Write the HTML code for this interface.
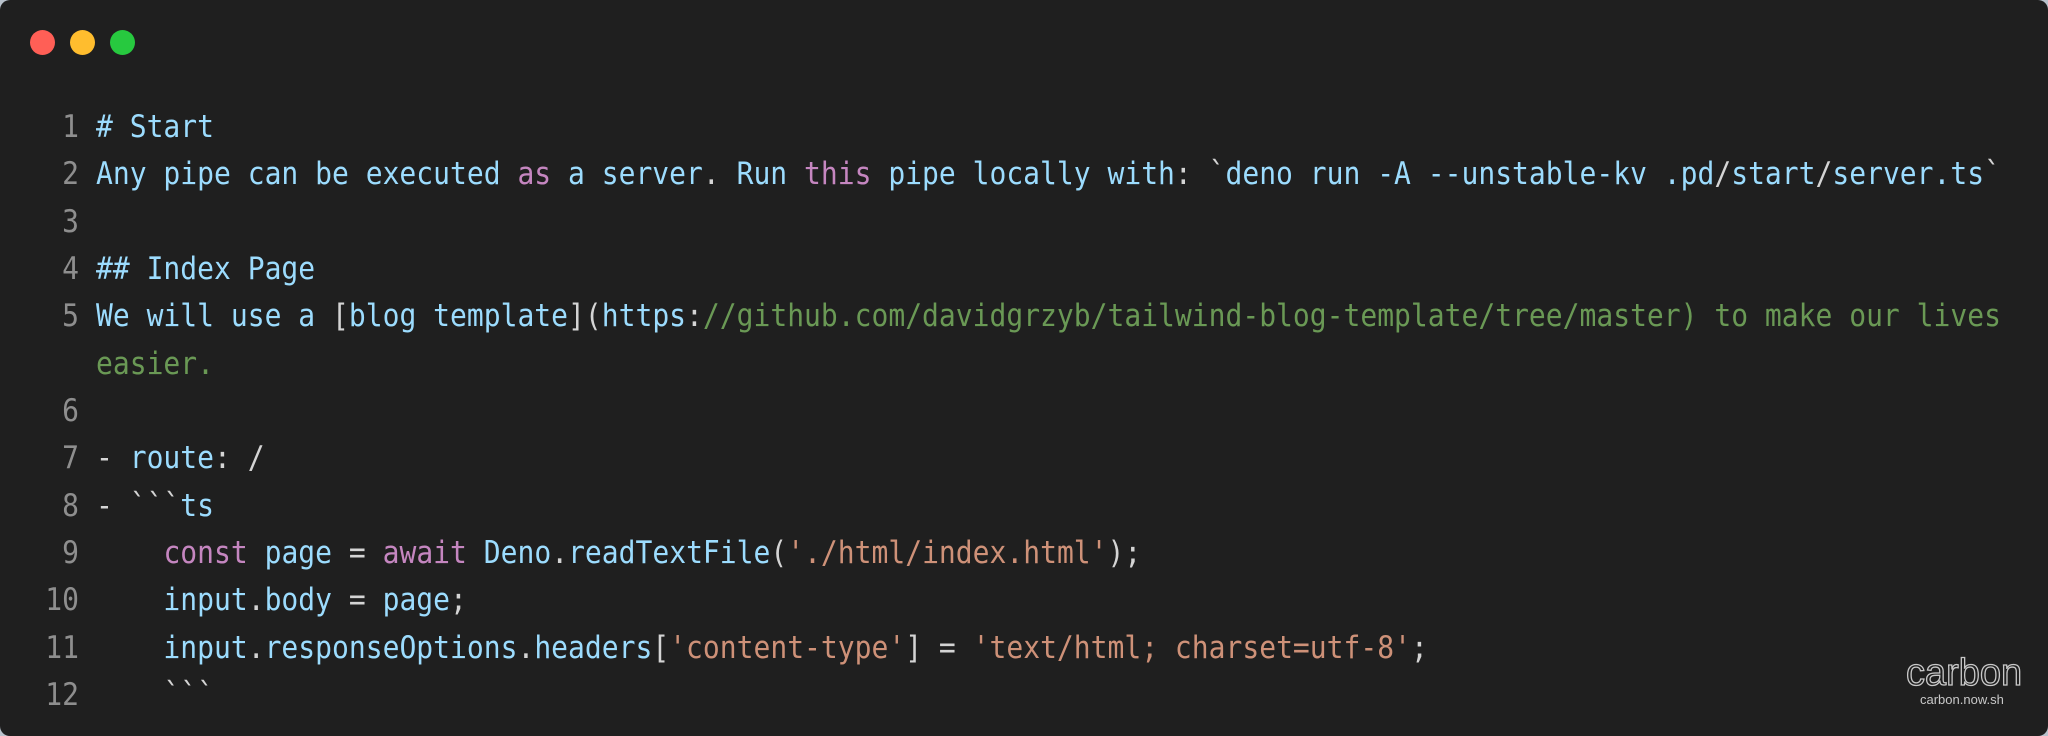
<!DOCTYPE html>
<html><head><meta charset="utf-8"><style>
html,body{margin:0;padding:0;width:2048px;height:736px;overflow:hidden;background:#b9c2cc;}
.card{position:absolute;left:0;top:0;width:2048px;height:736px;background:#1f1f1f;border-radius:10px;overflow:hidden;}
.dot{position:absolute;top:29.5px;width:25px;height:25px;border-radius:50%;}
.code{position:absolute;left:0;top:103px;font-family:"DejaVu Sans Mono","Liberation Mono",monospace;font-size:28px;}
.row{height:47.33px;line-height:47.33px;position:relative;}
.n{position:absolute;left:0;top:0;width:79px;text-align:right;color:#8e8e8e;white-space:pre;transform:scaleY(1.12);}
.t{position:absolute;left:96px;top:0;color:#9cdcfe;white-space:pre;transform:scaleY(1.12);}
.w{color:#d4d4d4}.p{color:#c586c0}.g{color:#6a9955}.o{color:#ce9178}.b{color:#9cdcfe}
.logo{position:absolute;left:1906px;top:652px;font-family:"Liberation Sans",sans-serif;font-size:38px;color:transparent;-webkit-text-stroke:1.3px #c8c8c8;letter-spacing:0px;}
.sub{position:absolute;left:1920px;top:692px;font-family:"Liberation Sans",sans-serif;font-size:13px;color:#c8c8c8;}
</style></head><body>
<div class="card">
<div class="dot" style="left:29.5px;background:#ff5f56"></div>
<div class="dot" style="left:69.5px;background:#ffbd2e"></div>
<div class="dot" style="left:109.5px;background:#27c93f"></div>
<div class="code"><div class="row"><span class="n">1</span><span class="t"># Start</span></div><div class="row"><span class="n">2</span><span class="t">Any pipe can be executed <span class="p">as</span> a server<span class="w">.</span> Run <span class="p">this</span> pipe locally with<span class="w">:</span> <span class="w">&#96;</span>deno run -A --unstable-kv .pd<span class="w">/</span>start<span class="w">/</span>server.ts<span class="w">&#96;</span></span></div><div class="row"><span class="n">3</span></div><div class="row"><span class="n">4</span><span class="t">## Index Page</span></div><div class="row"><span class="n">5</span><span class="t">We will use a <span class="w">[</span>blog template<span class="w">](</span>https<span class="w">:</span><span class="g">//github.com/davidgrzyb/tailwind-blog-template/tree/master) to make our lives</span></span></div><div class="row"><span class="t g">easier.</span></div><div class="row"><span class="n">6</span></div><div class="row"><span class="n">7</span><span class="t"><span class="w">-</span> route<span class="w">: /</span></span></div><div class="row"><span class="n">8</span><span class="t"><span class="w">-</span> <span class="w">&#96;&#96;&#96;</span>ts</span></div><div class="row"><span class="n">9</span><span class="t">    <span class="p">const</span> page <span class="w">=</span> <span class="p">await</span> Deno<span class="w">.</span>readTextFile<span class="w">(</span><span class="o">'./html/index.html'</span><span class="w">);</span></span></div><div class="row"><span class="n">10</span><span class="t">    input<span class="w">.</span>body <span class="w">=</span> page<span class="w">;</span></span></div><div class="row"><span class="n">11</span><span class="t">    input<span class="w">.</span>responseOptions<span class="w">.</span>headers<span class="w">[</span><span class="o">'content-type'</span><span class="w">] =</span> <span class="o">'text/html; charset=utf-8'</span><span class="w">;</span></span></div><div class="row"><span class="n">12</span><span class="t">    <span class="w">&#96;&#96;&#96;</span></span></div></div>
<div class="logo">carbon</div>
<div class="sub">carbon.now.sh</div>
</div>
</body></html>
